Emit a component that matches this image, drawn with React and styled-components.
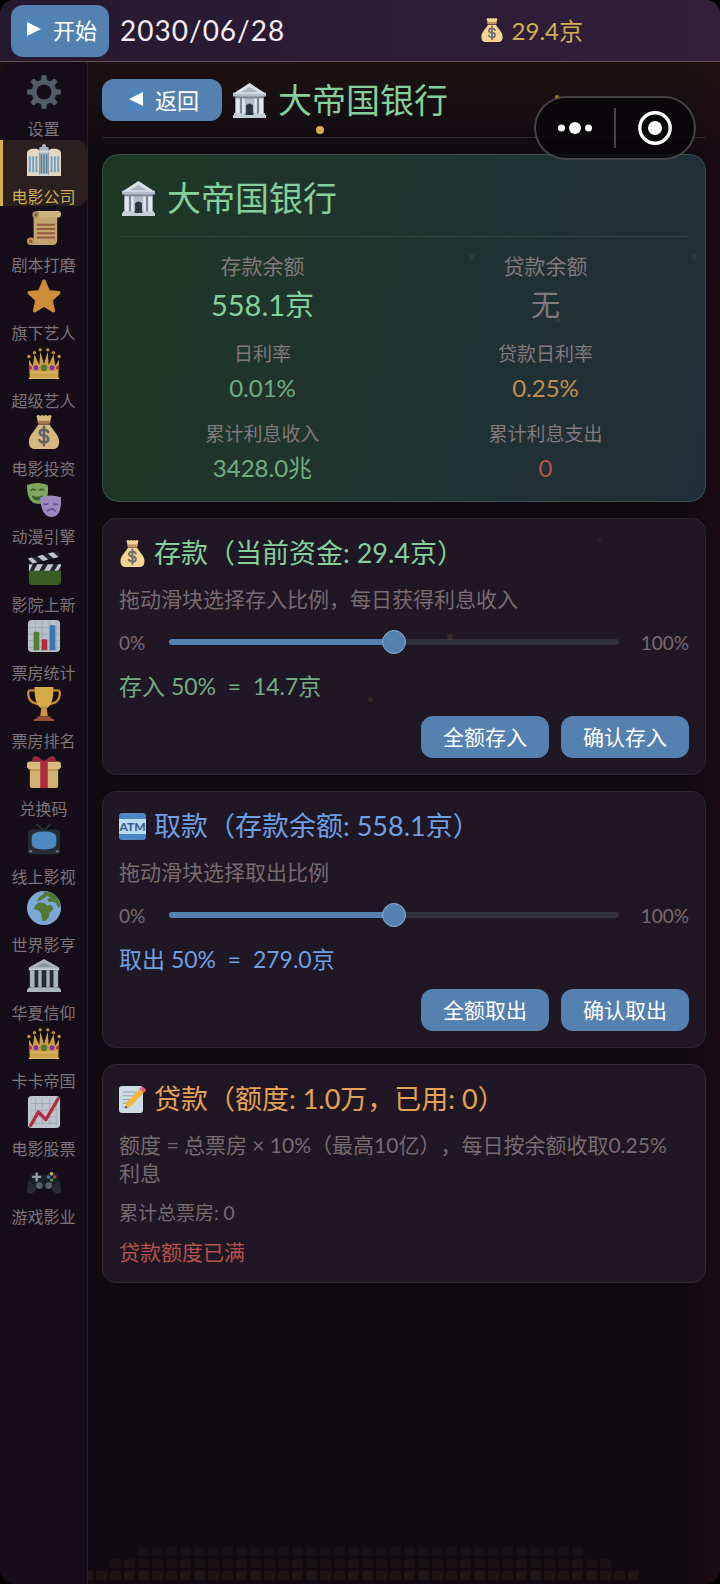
import React, { useState } from 'react';
import styled, { createGlobalStyle } from 'styled-components';

const GlobalStyle = createGlobalStyle`
  * {
    box-sizing: border-box;
  }
  body {
    margin: 0;
    background: #000;
    color: #f4ecf6;
    font-family: Lato, 'Noto Sans CJK SC', sans-serif;
    text-spacing-trim: space-all;
  }
  button {
    font-family: inherit;
    cursor: pointer;
  }
  h1, h2, h3, p, dl, dt, dd, ul {
    margin: 0;
    padding: 0;
    font-weight: 400;
  }
`;

const tones = {
  green: '#84cf9b',
  dimGreen: '#71ac83',
  blue: '#6f9fe2',
  orange: '#e5a155',
  dimOrange: '#c18c50',
  red: '#b5524d',
  grey: '#81797c',
  gold: '#cfae54',
};

const Page = styled.div`
  position: relative;
  display: flex;
  flex-direction: column;
  min-height: 100vh;
  overflow: hidden;
  border-radius: 14px;
  background:
    linear-gradient(to left, rgba(48, 12, 20, 0.35), transparent 36px),
    linear-gradient(to bottom, rgba(70, 40, 22, 0.4), transparent 150px),
    #100b11;
`;

const TopBar = styled.header`
  display: flex;
  align-items: center;
  gap: 11px;
  height: 62px;
  padding: 0 137px 0 11px;
  border-bottom: 1px solid #6b4f4c;
  background: linear-gradient(to right, #25192f, #331f3a);
`;

const DateText = styled.time`
  padding-bottom: 2px;
  font-size: 28px;
  letter-spacing: 1px;
`;

const Money = styled.div`
  display: flex;
  align-items: center;
  gap: 8px;
  margin-left: auto;
  padding-bottom: 2px;
  font-size: 24px;
  color: ${tones.gold};
`;

const Button = styled.button`
  display: flex;
  align-items: center;
  justify-content: center;
  gap: 8px;
  flex: none;
  height: ${(p) => (p.$tall ? 52 : 42)}px;
  padding: 0 ${(p) => p.$pad || 22}px 3px;
  border: 0;
  border-radius: 12px;
  background: #5481b0;
  color: #fff;
  font-size: ${(p) => (p.$icon ? 22 : 21)}px;
  white-space: nowrap;
`;

const Body = styled.div`
  display: flex;
  flex: 1;
`;

const Sidebar = styled.nav`
  position: relative;
  display: flex;
  flex-direction: column;
  gap: 2px;
  flex: none;
  width: 88px;
  padding-top: 10px;
  border-right: 1px solid #29212a;
  border-top-left-radius: 12px;
  background: #150e19;
`;

const NavItem = styled.button`
  display: flex;
  flex-direction: column;
  align-items: center;
  gap: 11px;
  height: 66px;
  padding: 3px 3px 0 0;
  border: 0;
  border-left: 3px solid ${(p) => (p.$active ? '#d6b04f' : 'transparent')};
  border-radius: 0 10px 10px 0;
  background: ${(p) => (p.$active ? '#2a201f' : 'transparent')};
  color: ${(p) => (p.$active ? tones.gold : '#7d7478')};
  font-size: 16px;
  line-height: 18px;
  white-space: nowrap;

  svg {
    opacity: ${(p) => (p.$active ? 0.95 : 0.86)};
  }
`;

const Main = styled.main`
  position: relative;
  display: flex;
  flex-direction: column;
  flex: 1;
  gap: 16px;
  min-width: 0;
  padding: 17px 14px 16px;
`;

const TitleRow = styled.div`
  display: flex;
  align-items: center;
  gap: 10px;
  height: 59px;
  padding-bottom: 16px;
  border-bottom: 1px solid #30272a;
`;

const BigTitle = styled.h1`
  display: flex;
  align-items: center;
  gap: 11px;
  font-size: 34px;
  line-height: 50px;
  color: ${tones.green};
`;

const Summary = styled.section`
  padding: 18px 18px 16px;
  border: 1px solid #34504a;
  border-radius: 16px;
  background: linear-gradient(100deg, #1e3826, #20332f 50%, #212e38);
`;

const SummaryHead = styled.div`
  padding-bottom: 13px;
  margin-bottom: 14px;
  border-bottom: 1px solid #32483f;
`;

const Stats = styled.dl`
  display: grid;
  grid-template-columns: 1fr 1fr;
  row-gap: 16px;
  text-align: center;
`;

const Stat = styled.div`
  display: flex;
  flex-direction: column;
  gap: 4px;

  dt {
    font-size: ${(p) => (p.$big ? 21 : 19)}px;
    line-height: ${(p) => (p.$big ? 30 : 26)}px;
    color: ${tones.grey};
  }
  dd {
    font-size: ${(p) => (p.$big ? 29 : 24)}px;
    line-height: ${(p) => (p.$big ? 40 : 34)}px;
    color: ${(p) => tones[p.$tone]};
  }
`;

const Card = styled.section`
  padding: 16px;
  border: 1px solid ${(p) => (p.$warm ? '#352830' : '#2c2633')};
  border-radius: 14px;
  background: #201725;
`;

const CardTitle = styled.h2`
  display: flex;
  align-items: center;
  gap: 8px;
  font-size: 27px;
  line-height: 36px;
  color: ${(p) => tones[p.$tone]};
`;

const Hint = styled.p`
  margin-top: 14px;
  font-size: 21px;
  line-height: 28px;
  color: #776b6d;
`;

const SmallHint = styled(Hint)`
  margin-top: 13px;
  font-size: 19px;
  line-height: 26px;
`;

const Warning = styled(Hint)`
  margin-top: 12px;
  color: ${tones.red};
`;

const SliderRow = styled.div`
  display: flex;
  align-items: center;
  gap: 22px;
  height: 24px;
  margin-top: 17px;
  font-size: 19px;
  color: #776b6d;
`;

const Bound = styled.span`
  min-width: ${(p) => p.$width}px;
`;

const Range = styled.input`
  flex: 1;
  min-width: 0;
  height: 24px;
  margin: 0;
  appearance: none;
  background: transparent;

  &::-webkit-slider-runnable-track {
    height: 6px;
    border-radius: 3px;
    background: linear-gradient(
      to right,
      #5481b0 var(--filled),
      #30303c var(--filled)
    );
  }
  &::-webkit-slider-thumb {
    appearance: none;
    width: 24px;
    height: 24px;
    margin-top: -9px;
    border: 1px solid #8fabcd;
    border-radius: 50%;
    background: #5481b0;
  }
`;

const Amount = styled.p`
  margin-top: 17px;
  font-size: 23px;
  line-height: 30px;
  white-space: pre;
  color: ${(p) => tones[p.$tone]};
`;

const Actions = styled.div`
  display: flex;
  justify-content: flex-end;
  gap: 12px;
  margin-top: 15px;
`;

const KeyCap = styled.span`
  display: flex;
  align-items: center;
  justify-content: center;
  width: 22px;
  height: 24px;
  border-radius: 3px;
  background: #4f84b9;
`;

const AtmBadge = styled.span`
  display: flex;
  align-items: center;
  width: 27px;
  height: 27px;
  border-radius: 3px;
  background: #4a87c4;

  span {
    width: 27px;
    background: #b9dcf5;
    color: #38618c;
    font: 900 12px/15px Lato, sans-serif;
    text-align: center;
  }
`;

// floats over the page in the host app's chrome
const Capsule = styled.div`
  position: absolute;
  top: 96px;
  right: 24px;
  display: flex;
  align-items: center;
  width: 162px;
  height: 64px;
  border: 2px solid rgba(255, 255, 255, 0.24);
  border-radius: 32px;
  background: rgba(6, 5, 8, 0.78);

  button {
    display: flex;
    justify-content: center;
    flex: 1;
    padding: 0;
    border: 0;
    background: none;
  }
  button + button {
    border-left: 2px solid rgba(255, 255, 255, 0.24);
    height: 40px;
    align-items: center;
  }
`;

const Seats = styled.div`
  position: absolute;
  left: 0;
  right: 0;
  bottom: 4px;
  display: flex;
  flex-direction: column;
  align-items: center;
  gap: 3px;
`;

const SeatRow = styled.div`
  display: flex;
  gap: 3px;

  i {
    width: 11px;
    height: 9px;
    border-radius: 2px;
    background: ${(p) => p.$shade};
  }
`;

const Spark = styled.i`
  position: absolute;
  left: ${(p) => p.$x}px;
  top: ${(p) => p.$y}px;
  width: ${(p) => p.$size}px;
  height: ${(p) => p.$size}px;
  border-radius: 50%;
  background: #e0b65a;
  opacity: ${(p) => p.$alpha};
  pointer-events: none;
`;

const spin = (step, count) => Array.from({ length: count }, (_, i) => i * step);

const crown = (
  <>
    <path
      fill="#eab850"
      d="M3 34 2 13l4 7 2-12 5 11 1-14 4 13 4-13 1 14 5-11 2 12 4-7-1 21z"
    />
    <path fill="#f5cf70" d="M3 26h30v2H3zM2 32h32v2H2z" />
    <g fill="#e3a844">
      <circle cx="2" cy="10" r="1.8" />
      <circle cx="8" cy="6" r="1.8" />
      <circle cx="14" cy="3" r="1.8" />
      <circle cx="22" cy="3" r="1.8" />
      <circle cx="28" cy="6" r="1.8" />
      <circle cx="34" cy="10" r="1.8" />
    </g>
    <circle cx="18" cy="22" r="3.6" fill="#5a8f3a" />
    <circle cx="9.5" cy="22" r="2.7" fill="#9330b5" />
    <circle cx="26.5" cy="22" r="2.7" fill="#9330b5" />
    <circle cx="3.5" cy="22" r="1.8" fill="#cf2f4a" />
    <circle cx="32.5" cy="22" r="1.8" fill="#cf2f4a" />
  </>
);

const glyphs = {
  gear: (
    <g>
      {spin(45, 8).map((deg) => (
        <path
          key={deg}
          fill="#5d6b75"
          d="M14.6 7.5 15.3 1.2Q15.500 0 16.7 0h2.6q1.2 0 1.4 1.2l.7 6.3z"
          transform={`rotate(${deg} 18 18)`}
        />
      ))}
      <circle cx="18" cy="18" r="10.5" fill="none" stroke="#5d6b75" strokeWidth="5" />
    </g>
  ),
  studio: (
    <>
      <path fill="#efe0ca" d="M0 10q0-2 3-3l2-1h5l3 1.5V35H0zM23 7.500 26 6h5l2 1q3 1 3 3v25H23z" />
      <path fill="#aebfcb" d="M13 6q0-2 3-2V2q2-2 4 0v2q3 0 3 2v29H13z" />
      <path fill="#dfe6ea" d="M13 8h10v2H13zM13 33h10v2H13z" />
      <path
        fill="#6fa9d6"
        d="M2 14h2v17H2zm3.500 0h2v17h-2zM9 14h2v17H9zm16 0h2v17h-2zm3.500 0h2v17h-2zm3.500 0h2v17h-2z"
      />
      <path fill="#557f9f" d="M14.500 12h1.500v20h-1.500zm2.800 0h1.500v20h-1.500zm2.800 0h1.500v20h-1.500z" />
    </>
  ),
  scroll: (
    <>
      <path fill="#dfbd7d" d="M7 3h25v27q0 6-4 6H5l2-6z" />
      <circle cx="9.5" cy="4" r="3.8" fill="#cda263" />
      <circle cx="9.5" cy="4" r="1.7" fill="#966744" />
      <path fill="#edd092" d="M10 0h23q3 0 3 3.500T33 7H11q2-1 2-3.500T10 0z" />
      <circle cx="4" cy="32" r="4" fill="#d8a965" />
      <circle cx="4" cy="32" r="1.8" fill="#966744" />
      <path stroke="#a9674c" strokeWidth="2" d="M10.500 14.500h19M10.500 19h19M10.500 23.500h19M10.500 28h19" />
    </>
  ),
  star: (
    <path
      fill="#efa23e"
      d="M16.300 1.700q1.700-2.700 3.400 0l4.300 10.300 9.800.800q3 .700 1 3.200l-7.500 7 2.400 10q.200 3-2.700 2.300L18 29.700l-9 5.600q-2.900.700-2.700-2.300l2.400-10L1.200 16q-2-2.500 1-3.200l9.800-.800z"
    />
  ),
  crown,
  bag: (
    <>
      <path fill="#f5d390" d="M12 10h12c3 6 10 11 10 18 0 6-3 8-7 8H9c-4 0-7-2-7-8C2 21 9 16 12 10z" />
      <path fill="#f5d390" d="M10 1q2-2 4 0 2-2 4 0 2-2 4 0 2-2 4 0l-2 8H12z" />
      <rect x="11" y="6" width="14" height="3" rx="1.5" fill="#c78b5b" />
      <path
        fill="none"
        stroke="#6b6f72"
        strokeWidth="2.6"
        strokeLinecap="round"
        d="M22.500 18q-1.500-2.500-4.500-2.500c-6 0-6 6 0 6.500s6 7 0 7q-3.500 0-5-2.500M18 12.500v19.500"
      />
    </>
  ),
  masks: (
    <>
      <path fill="#90c069" d="M0 2q11-4 22 0 2 20-10 20T0 2z" />
      <path fill="none" stroke="#43702c" strokeWidth="2" d="M4 8q3-3 5 0M13 8q3-3 5 0" />
      <path fill="#43702c" d="M5 13q6 3 12 0-1 5.500-6 5.500T5 13z" />
      <path fill="#b59ddc" d="M14 15q11-3.500 22 0 1 21-10 21T14 15z" />
      <path fill="none" stroke="#7a60ae" strokeWidth="2" d="M17.500 22q3 2 5-.500M28 21.500q2 2.500 5 .500M21 30q5-5 9.500 0" />
    </>
  ),
  clapper: (
    <>
      <path fill="#3f6b28" d="M2 20h34v12q0 4-4 4H6q-4 0-4-4z" />
      <path fill="#252b30" d="M2 14h34v7H2z" />
      <path fill="#dfe5ea" d="M2 14h4l-3 7H2zm9 0h6l-4 7H7zm11 0h6l-4 7h-6zm11 0h3v2l-3 5h-4z" />
      <path fill="#252b30" d="M1 8 33 0l2 6L3 14z" />
      <path fill="#dfe5ea" d="m1 8 4-1 6 5-5 1.300zM11 5.500l5.500-1.400 6 5-5.500 1.400zM22 2.700l5.500-1.400 6 5L28 7.700z" />
    </>
  ),
  bars: (
    <>
      <rect x="1" y="1" width="34" height="34" rx="4" fill="#d3dce4" />
      <path stroke="#b7c6d1" d="M1 9h34M1 16h34M1 23h34M1 30h34M9 1v34M16 1v34M24 1v34M31 1v34" />
      <path fill="#5b9138" d="M7 15q0-1.500 1.500-1.500h3Q13 13.500 13 15v18H7z" />
      <path fill="#d32e46" d="M15.500 23q0-1.500 1.500-1.500h3q1.500 0 1.500 1.500v10h-6z" />
      <path fill="#4189cc" d="M24 8q0-1.500 1.500-1.500h3Q30 6.500 30 8v25h-6z" />
    </>
  ),
  trophy: (
    <>
      <path
        fill="none"
        stroke="#e09b3a"
        strokeWidth="2.5"
        d="M9 3.500H3Q1 3.500 1.300 8q.700 9 10.700 10M27 3.500h6q2 0 1.700 4.500-.700 9-10.700 10"
      />
      <path fill="#f5c250" d="M8 0h20q.500 17-6 22h-8Q7.500 17 8 0z" />
      <path fill="#eba942" d="M15.500 20h5l1.500 11h-8z" />
      <path fill="#b4593d" d="M7 36q0-3 4-3v-2h14v2q4 0 4 3z" />
    </>
  ),
  gift: (
    <>
      <rect x="3" y="13" width="30" height="22" rx="3" fill="#f2cc83" />
      <rect y="7" width="36" height="8" rx="3" fill="#fad88e" />
      <path fill="#d9a957" d="M3 15h30v2H3z" />
      <path fill="#a52c40" d="M18 7Q9-2 6 3q-1 2 0 4zM18 7q9-9 12-4 1 2 0 4z" />
      <path fill="#c82f46" d="M14 6h8v29h-8z" />
    </>
  ),
  tv: (
    <>
      <path stroke="#39434b" strokeWidth="1.5" fill="none" d="M10 1l8 7 7-7" />
      <rect x="1" y="7" width="34" height="26" rx="3" fill="#29313a" />
      <path fill="#589ddd" d="M5 15q0-6 13-6t13 6v7q0 6-13 6T5 22z" />
      <circle cx="4" cy="30" r="1.5" fill="#78838b" />
      <circle cx="32" cy="30" r="1.5" fill="#78838b" />
    </>
  ),
  globe: (
    <>
      <circle cx="18" cy="18" r="18" fill="#8fc2f5" />
      <path
        fill="#5c8a36"
        d="M13 6l5-3-1-2q10-1 15 6l3.500 8-2 3-3-5-4-2-3 1-2-3 3-2-3-2-4 3-4 2-3 1zM9 15l4-3 6 1 2 2 5 0 2 4-4 4-1 5-4 4-3-1-1-7-2-3-6-2z"
      />
    </>
  ),
  hall: (
    <>
      <path fill="#c4ced6" d="M0 33q0-2 3-3h30q3 1 3 3v2H0zM2 9 18 0l16 9v3H2z" />
      <path fill="#98a7b3" d="M9 8.500 18 4l9 4.500z" />
      <path fill="#e4eaee" d="M2 10h32v2H2z" />
      <path fill="#293038" d="M4 12h28v17H4z" />
      <path fill="#c4ced6" d="M3 12h5v18H3zm9 0h3.500v18H12zm8.500 0H24v18h-3.500zm7.500 0h5v18h-5z" />
    </>
  ),
  bank: (
    <>
      <path fill="#b3bdc8" d="M1 10h34v4H1zM4 14h28v17H4z" />
      <path fill="#d8dfe6" d="M1 11 18 0l17 11z" />
      <path fill="#aab5c1" d="M9 9.500 18 4l9 5.500z" />
      <path fill="#7c8895" d="M3 14h30v2H3zM8 16h2.500v15H8zm17.500 0H28v15h-2.500z" />
      <path fill="#e1e7ec" d="M3.500 16H8v16H3.500zm7 0H13v16h-2.500zm12.500 0h2.500v16H23zm5 0h4.500v16H28z" />
      <path fill="#2b3440" d="M14.500 33V23q3.500-4 7 0v10z" />
      <path fill="#c6ced7" d="M2 31h12v2h8v-2h12v2h1v3H1v-3h1z" />
    </>
  ),
  chart: (
    <>
      <rect x="1" y="1" width="34" height="34" rx="4" fill="#dbe2e8" />
      <path stroke="#b9c6d0" d="M4 9h28M4 16h28M4 23h28M4 30h28M9 4v28M16 4v28M24 4v28M31 4v28" />
      <path
        fill="none"
        stroke="#cc3049"
        strokeWidth="3.5"
        strokeLinecap="round"
        strokeLinejoin="round"
        d="M4 32 12 18l8 8L33 4"
      />
    </>
  ),
  gamepad: (
    <>
      <path fill="#1d2127" d="M4 12Q10 7 15 12h6q5-5 11 0 3 6 4 16l-12-2H12L0 28q1-10 4-16z" />
      <path fill="#2c3238" d="M0 31q0-8 3-12l7 9Q4 35 0 31zM36 31q0-8-3-12l-7 9q6 7 10 3z" />
      <circle cx="13" cy="24" r="3.5" fill="#646d75" />
      <circle cx="23" cy="24" r="3.5" fill="#646d75" />
      <path fill="#a9b5bf" d="M9 10h2.500v3.500H15V16h-3.500v3.500H9V16H5.500v-2.500H9z" />
      <circle cx="26" cy="11.5" r="1.9" fill="#d8cf52" />
      <circle cx="22.7" cy="14.8" r="1.9" fill="#4c8ed4" />
      <circle cx="29.3" cy="14.8" r="1.9" fill="#d3434d" />
      <circle cx="26" cy="18" r="1.9" fill="#53a34c" />
    </>
  ),
  memo: (
    <>
      <rect x="0" y="0" width="32" height="36" rx="4" fill="#cfdbe4" />
      <path stroke="#8fa2b0" strokeWidth="1.5" d="M5 8h18M5 13h15M5 18h12M5 23h7M5 28h4" />
      <path fill="#f2b83c" d="M10 22 27 4l6 5-17 18-8 3z" />
      <path fill="#da6475" d="m27 4 3-3q5 1 6 5l-3 3z" />
      <path fill="#31383f" d="m8 30 1-3.500 2.500 2.200z" />
    </>
  ),
};

const Glyph = ({ name, size = 34 }) => (
  <svg width={size} height={size} viewBox="0 0 36 36" aria-hidden="true">
    {glyphs[name]}
  </svg>
);

const Arrow = ({ left }) => (
  <KeyCap aria-hidden="true">
    <svg width="14" height="14" viewBox="0 0 14 14" fill="#fff">
      <path d={left ? 'M14 0v14L0 7z' : 'M0 0v14l14-7z'} />
    </svg>
  </KeyCap>
);

const navItems = [
  ['gear', '设置'],
  ['studio', '电影公司'],
  ['scroll', '剧本打磨'],
  ['star', '旗下艺人'],
  ['crown', '超级艺人'],
  ['bag', '电影投资'],
  ['masks', '动漫引擎'],
  ['clapper', '影院上新'],
  ['bars', '票房统计'],
  ['trophy', '票房排名'],
  ['gift', '兑换码'],
  ['tv', '线上影视'],
  ['globe', '世界影亨'],
  ['hall', '华夏信仰'],
  ['crown', '卡卡帝国'],
  ['chart', '电影股票'],
  ['gamepad', '游戏影业'],
];

const stats = [
  { label: '存款余额', value: '558.1京', tone: 'green', big: true },
  { label: '贷款余额', value: '无', tone: 'grey', big: true },
  { label: '日利率', value: '0.01%', tone: 'dimGreen' },
  { label: '贷款日利率', value: '0.25%', tone: 'dimOrange' },
  { label: '累计利息收入', value: '3428.0兆', tone: 'dimGreen' },
  { label: '累计利息支出', value: '0', tone: 'red' },
];

const seatRows = [
  [32, '#181114'],
  [36, '#191215'],
  [40, '#1e1516'],
];

const sparks = [
  [316, 126, 8, 0.95],
  [555, 95, 4, 0.7],
  [469, 254, 6, 0.08],
  [691, 254, 6, 0.08],
  [555, 317, 6, 0.08],
  [447, 634, 6, 0.12],
  [368, 697, 5, 0.1],
  [597, 537, 5, 0.05],
];

// amounts are cut, not rounded, to one decimal
const share = (total, percent) =>
  (Math.floor((total * percent) / 10) / 10).toFixed(1);

function TransferCard({ icon, title, hint, verb, total, tone, amountTone }) {
  const [percent, setPercent] = useState(50);

  return (
    <Card>
      <CardTitle $tone={tone}>
        {icon}
        {title}
      </CardTitle>
      <Hint>{hint}</Hint>
      <SliderRow>
        <Bound $width={28}>0%</Bound>
        <Range
          type="range"
          min="0"
          max="100"
          aria-label={`${verb}比例`}
          value={percent}
          onChange={(e) => setPercent(Number(e.target.value))}
          style={{ '--filled': `${percent}%` }}
        />
        <Bound $width={47}>100%</Bound>
      </SliderRow>
      <Amount $tone={amountTone}>
        {`${verb} ${percent}%  =  ${share(total, percent)}京`}
      </Amount>
      <Actions>
        <Button type="button" onClick={() => setPercent(100)}>
          全额{verb}
        </Button>
        <Button type="button">确认{verb}</Button>
      </Actions>
    </Card>
  );
}

function App() {
  const [current, setCurrent] = useState('电影公司');

  return (
    <Page>
      <GlobalStyle />
      <TopBar>
        <Button type="button" $tall $icon $pad={12}>
          <Arrow />
          开始
        </Button>
        <DateText>2030/06/28</DateText>
        <Money>
          <Glyph name="bag" size={24} />
          29.4京
        </Money>
      </TopBar>
      <Seats aria-hidden="true">
        {seatRows.map(([count, shade]) => (
          <SeatRow key={count} $shade={shade}>
            {spin(1, count).map((n) => (
              <i key={n} />
            ))}
          </SeatRow>
        ))}
      </Seats>
      <Body>
        <Sidebar>
          {navItems.map(([icon, label]) => (
            <NavItem
              key={label}
              type="button"
              $active={label === current}
              onClick={() => setCurrent(label)}
            >
              <Glyph name={icon} />
              {label}
            </NavItem>
          ))}
        </Sidebar>
        <Main>
          <TitleRow>
            <Button type="button" $icon $pad={23}>
              <Arrow left />
              返回
            </Button>
            <BigTitle>
              <Glyph name="bank" size={35} />
              大帝国银行
            </BigTitle>
          </TitleRow>
          <Summary>
            <SummaryHead>
              <BigTitle as="h2">
                <Glyph name="bank" size={35} />
                大帝国银行
              </BigTitle>
            </SummaryHead>
            <Stats>
              {stats.map(({ label, value, tone, big }) => (
                <Stat key={label} $tone={tone} $big={big}>
                  <dt>{label}</dt>
                  <dd>{value}</dd>
                </Stat>
              ))}
            </Stats>
          </Summary>
          <TransferCard
            icon={<Glyph name="bag" size={27} />}
            title="存款（当前资金: 29.4京）"
            hint="拖动滑块选择存入比例，每日获得利息收入"
            verb="存入"
            total={29.4}
            tone="green"
            amountTone="dimGreen"
          />
          <TransferCard
            icon={
              <AtmBadge>
                <span>ATM</span>
              </AtmBadge>
            }
            title="取款（存款余额: 558.1京）"
            hint="拖动滑块选择取出比例"
            verb="取出"
            total={558.1}
            tone="blue"
            amountTone="blue"
          />
          <Card $warm>
            <CardTitle $tone="orange">
              <Glyph name="memo" size={27} />
              贷款（额度: 1.0万，已用: 0）
            </CardTitle>
            <Hint>
              额度 = 总票房 × 10%（最高10亿），每日按余额收取0.25%
              <br />
              利息
            </Hint>
            <SmallHint>累计总票房: 0</SmallHint>
            <Warning>贷款额度已满</Warning>
          </Card>
        </Main>
      </Body>
      {sparks.map(([x, y, size, alpha]) => (
        <Spark key={`${x}-${y}`} $x={x} $y={y} $size={size} $alpha={alpha} />
      ))}
      <Capsule>
        <button type="button" aria-label="更多">
          <svg width="36" height="14" viewBox="0 0 36 14" fill="#fff">
            <circle cx="4.5" cy="7" r="3.5" />
            <circle cx="18" cy="7" r="6" />
            <circle cx="31.5" cy="7" r="3.5" />
          </svg>
        </button>
        <button type="button" aria-label="关闭">
          <svg width="34" height="34" viewBox="0 0 34 34">
            <circle cx="17" cy="17" r="15.2" fill="none" stroke="#fff" strokeWidth="3.4" />
            <circle cx="17" cy="17" r="7" fill="#fff" />
          </svg>
        </button>
      </Capsule>
    </Page>
  );
}

export default App;
